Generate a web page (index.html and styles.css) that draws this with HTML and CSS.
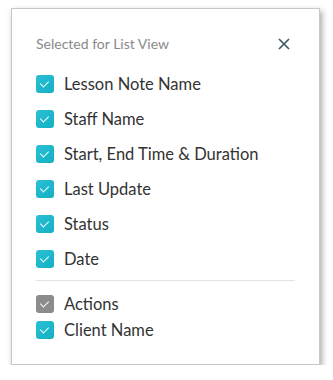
FILE: index.html
```html
<!DOCTYPE html>
<html lang="en">
<head>
    <meta charset="UTF-8">
    <title>List View</title>
    <link rel="stylesheet" href="styles.css">
</head>
<body>
    <div class="panel">
        <div class="panel-head">
            <span class="title">Selected for List View</span>
            <svg class="close" width="12" height="12" viewBox="0 0 12 12"><path d="M1 1L11 11M11 1L1 11" stroke="#3b5661" stroke-width="1.6" fill="none"/></svg>
        </div>
        <ul class="opts">
            <li><span class="box"></span>Lesson Note Name</li>
            <li><span class="box"></span>Staff Name</li>
            <li><span class="box"></span>Start, End Time &amp; Duration</li>
            <li><span class="box"></span>Last Update</li>
            <li><span class="box"></span>Status</li>
            <li><span class="box"></span>Date</li>
        </ul>
        <hr>
        <ul class="opts fixed">
            <li><span class="box grey"></span>Actions</li>
            <li><span class="box"></span>Client Name</li>
        </ul>
    </div>
</body>
</html>
```

FILE: styles.css
```css
body {
    margin: 0;
    background: #fff;
    font-family: 'Lato', sans-serif;
}
.panel {
    margin: 8px 0 0 11px;
    width: 309px;
    height: 357px;
    box-sizing: border-box;
    border: 1px solid #c8c8c8;
    box-shadow: 2px 3px 6px rgba(0,0,0,0.35);
    padding: 0 24px;
    background: #fff;
}
.panel-head {
    display: flex;
    justify-content: space-between;
    align-items: center;
    height: 69px;
    padding-right: 5px;
}
.title {
    font-size: 14px;
    color: #8a8a8a;
}
.opts {
    list-style: none;
    margin: 0;
    padding: 0;
}
.opts li {
    display: flex;
    align-items: center;
    height: 35px;
    font-size: 16.5px;
    color: #333;
}
.opts li:first-child { margin-top: -12px; }
.fixed li { height: 26px; }
.fixed li:first-child { margin-top: 0; }
.box {
    width: 18px;
    height: 18px;
    border-radius: 3px;
    background: linear-gradient(135deg, #2bbfd6, #13b0c2);
    margin-right: 10px;
    position: relative;
}
.box::after {
    content: "";
    position: absolute;
    left: 6px;
    top: 4px;
    width: 4px;
    height: 7px;
    border: solid #fff;
    border-width: 0 1.5px 1.5px 0;
    transform: rotate(45deg);
}
.box.grey { background: #8c8c8c; }
hr {
    border: none;
    border-top: 1px solid #e2e2e2;
    margin: 4px 0 10px;
}
```
